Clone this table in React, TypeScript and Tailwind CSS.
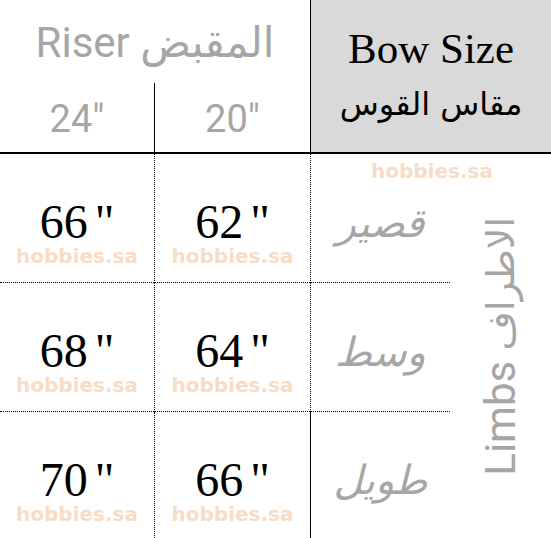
import React from 'react';

const sans = "font-['Roboto','DejaVu_Sans',sans-serif]";
const serif = "font-['Liberation_Serif','DejaVu_Sans',serif]";
const arabic = "font-['DejaVu_Sans',sans-serif]";

const rows = [
  { long: '66', short: '62', limb: 'قصير' },
  { long: '68', short: '64', limb: 'وسط' },
  { long: '70', short: '66', limb: 'طويل' },
];

function Watermark() {
  return (
    <span className="font-['DejaVu_Sans',sans-serif] font-bold text-[20px] leading-[20px] text-[#f8dcc6]">
      hobbies.sa
    </span>
  );
}

function SizeCell({ value, last, divider }: { value: string; last: boolean; divider?: boolean }) {
  return (
    <div
      className={`flex flex-col items-center pt-[44px] ${last ? '' : 'border-b border-dotted border-black'} ${
        divider ? 'border-l border-dotted border-l-black' : ''
      }`}
    >
      <span className={`${serif} text-[48px] leading-[48px] text-black`}>
        {value}
        <span className="ml-[7px]">"</span>
      </span>
      <div className="-mt-[1px]">
        <Watermark />
      </div>
    </div>
  );
}

export default function App() {
  return (
    <div className="w-[551px] h-[538px] bg-white flex flex-col overflow-hidden">
      {/* header */}
      <div className="flex h-[152px]">
        <div className="w-[310px] flex flex-col">
          <div className={`h-[83px] pt-[22px] text-center ${sans} text-[42px] leading-[42px] text-[#a6a6a6]`}>
            Riser المقبض
          </div>
          <div className={`flex flex-1 ${sans} text-[38px] leading-[38px] text-[#a6a6a6]`}>
            <div className="w-[154px] pt-[17px] text-center">24"</div>
            <div className="flex-1 border-l border-black pt-[17px] text-center">20"</div>
          </div>
        </div>
        <div className="flex-1 border-l border-black bg-[#d9d9d9] flex flex-col items-center pt-[27px]">
          <span className={`${serif} text-[43px] leading-[43px] text-black`}>Bow Size</span>
          <span className={`${arabic} text-[32px] leading-[40px] mt-[14px] text-black`}>مقاس القوس</span>
        </div>
      </div>
      <div className="h-[2px] bg-black" />

      {/* body */}
      <div className="flex-1 grid grid-cols-[154px_156px_140px_101px] grid-rows-[129px_129px_1fr]">
        {rows.map((r, i) => {
          const last = i === rows.length - 1;
          return (
            <React.Fragment key={r.limb}>
              <SizeCell value={r.long} last={last} />
              <SizeCell value={r.short} last={last} divider />
              <div
                className={`border-l border-l-black relative flex items-center justify-center pt-[10px] ${
                  last ? '' : 'border-b border-dotted border-b-black'
                }`}
              >
                {i === 0 && (
                  <div className="absolute top-[6px] left-[60px]">
                    <Watermark />
                  </div>
                )}
                <span className={`${arabic} italic text-[40px] leading-[40px] text-[#a6a6a6]`}>{r.limb}</span>
              </div>
              {i === 0 && (
                <div className="row-span-3 flex items-center justify-center">
                  <span
                    className={`${sans} text-[42px] leading-[42px] text-[#a6a6a6] [writing-mode:vertical-rl] rotate-180 whitespace-nowrap`}
                  >
                    Limbs <span className="text-[38px]">الاطراف</span>
                  </span>
                </div>
              )}
            </React.Fragment>
          );
        })}
      </div>
    </div>
  );
}
